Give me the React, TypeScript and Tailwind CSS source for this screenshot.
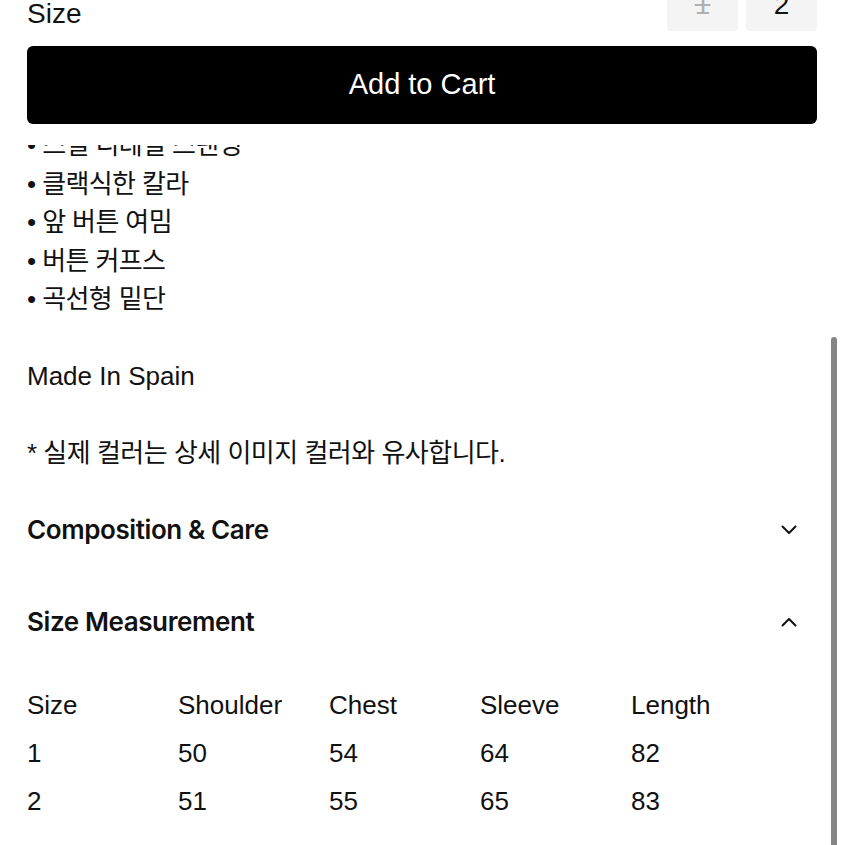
import React from "react";

const font = { fontFamily: '"Liberation Sans", "Noto Sans CJK KR", sans-serif' };
const titleFont = { fontFamily: 'Inter, "Liberation Sans", sans-serif' };

const Chevron = ({ up }: { up?: boolean }) => (
  <svg width="16" height="10" viewBox="0 0 16 10" fill="none" className="mr-[21px]">
    <polyline
      points={up ? "1.5,8.5 8,2 14.5,8.5" : "1.5,1.5 8,8 14.5,1.5"}
      stroke="#111"
      strokeWidth="2"
      strokeLinecap="round"
      strokeLinejoin="round"
    />
  </svg>
);

const bullets = ["스틸 디테일 스탠딩", "클랙식한 칼라", "앞 버튼 여밈", "버튼 커프스", "곡선형 밑단"];

const sizes = [
  ["Size", "Shoulder", "Chest", "Sleeve", "Length"],
  ["1", "50", "54", "64", "82"],
  ["2", "51", "55", "65", "83"],
];

const App: React.FC = () => {
  return (
    <div className="relative w-[845px] h-[845px] overflow-hidden bg-white text-[#111]" style={font}>
      {/* header: size picker + cart */}
      <div className="px-[27px] pr-[28px] bg-white">
        <div className="flex justify-between items-end h-[31px]">
          <span className="self-start text-[28px] leading-[28px]">Size</span>
          <div className="flex gap-[8px]">
            <button className="w-[71px] h-[52px] rounded-[3px] bg-[#f4f4f4] text-[28px] text-[#b0b0b0] line-through">1</button>
            <button className="w-[71px] h-[52px] rounded-[3px] bg-[#f4f4f4] text-[28px] text-[#111]">2</button>
          </div>
        </div>
        <button className="mt-[15px] w-full h-[78px] rounded-[6px] bg-black text-white text-[29px]">
          Add to Cart
        </button>
        <div className="h-[21px]" />
      </div>

      {/* description scrolled under header */}
      <div className="px-[27px] overflow-hidden">
        <div className="-mt-[19px] text-[26px] leading-[38.5px]">
          {bullets.map((b) => (
            <div key={b} className="h-[38.5px] whitespace-nowrap tracking-[-0.6px]">
              • {b}
            </div>
          ))}
          <div className="h-[38.5px]" />
          <div className="h-[38.5px]">Made In Spain</div>
          <div className="h-[38.5px]" />
          <div className="h-[38.5px] whitespace-nowrap tracking-[-0.5px]">* 실제 컬러는 상세 이미지 컬러와 유사합니다.</div>
        </div>

        <div className="mt-[11px]">
          <div className="h-[92px] flex items-center justify-between">
            <span className="text-[26px] font-semibold tracking-[-0.4px]" style={titleFont}>Composition &amp; Care</span>
            <Chevron />
          </div>
          <div className="h-[92px] flex items-center justify-between">
            <span className="text-[26px] font-semibold tracking-[-0.4px]" style={titleFont}>Size Measurement</span>
            <Chevron up />
          </div>
          <div className="pt-[14px]">
            {sizes.map((row, i) => (
              <div key={i} className="grid grid-cols-[151px_151px_151px_151px_151px] h-[48px] items-center text-[26px]">
                {row.map((c, j) => (
                  <span key={j}>{c}</span>
                ))}
              </div>
            ))}
          </div>
        </div>
      </div>

      {/* scrollbar */}
      <div className="absolute left-[831px] top-[337px] w-[6px] h-[520px] rounded-full bg-[#858585]" />
    </div>
  );
};

export default App;
